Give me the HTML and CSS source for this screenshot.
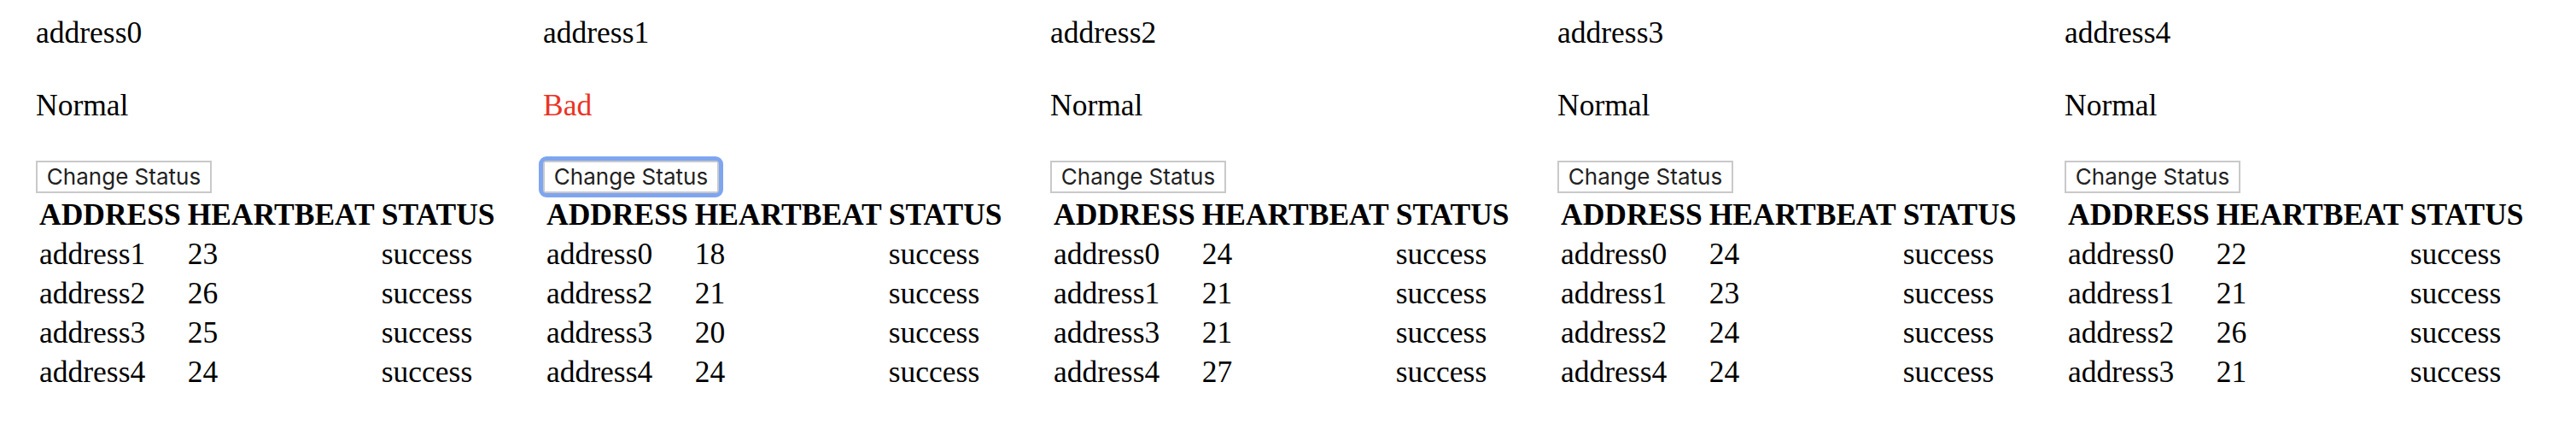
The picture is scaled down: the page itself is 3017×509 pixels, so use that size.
FILE: index.html
```html
<!DOCTYPE html>
<html lang="en">
<head>
<meta charset="utf-8">
<title>Heartbeat</title>
<link rel="stylesheet" href="styles.css">
</head>
<body>
<div class="board">
  <section class="node">
    <div class="addr">address0</div>
    <div class="status">Normal</div>
    <div class="actions"><button class="btn">Change Status</button></div>
    <table class="peers">
      <tr><th>ADDRESS</th><th>HEARTBEAT</th><th>STATUS</th></tr>
      <tr><td>address1</td><td>23</td><td>success</td></tr>
      <tr><td>address2</td><td>26</td><td>success</td></tr>
      <tr><td>address3</td><td>25</td><td>success</td></tr>
      <tr><td>address4</td><td>24</td><td>success</td></tr>
    </table>
  </section>
  <section class="node">
    <div class="addr">address1</div>
    <div class="status bad">Bad</div>
    <div class="actions"><button class="btn focused">Change Status</button></div>
    <table class="peers">
      <tr><th>ADDRESS</th><th>HEARTBEAT</th><th>STATUS</th></tr>
      <tr><td>address0</td><td>18</td><td>success</td></tr>
      <tr><td>address2</td><td>21</td><td>success</td></tr>
      <tr><td>address3</td><td>20</td><td>success</td></tr>
      <tr><td>address4</td><td>24</td><td>success</td></tr>
    </table>
  </section>
  <section class="node">
    <div class="addr">address2</div>
    <div class="status">Normal</div>
    <div class="actions"><button class="btn">Change Status</button></div>
    <table class="peers">
      <tr><th>ADDRESS</th><th>HEARTBEAT</th><th>STATUS</th></tr>
      <tr><td>address0</td><td>24</td><td>success</td></tr>
      <tr><td>address1</td><td>21</td><td>success</td></tr>
      <tr><td>address3</td><td>21</td><td>success</td></tr>
      <tr><td>address4</td><td>27</td><td>success</td></tr>
    </table>
  </section>
  <section class="node">
    <div class="addr">address3</div>
    <div class="status">Normal</div>
    <div class="actions"><button class="btn">Change Status</button></div>
    <table class="peers">
      <tr><th>ADDRESS</th><th>HEARTBEAT</th><th>STATUS</th></tr>
      <tr><td>address0</td><td>24</td><td>success</td></tr>
      <tr><td>address1</td><td>23</td><td>success</td></tr>
      <tr><td>address2</td><td>24</td><td>success</td></tr>
      <tr><td>address4</td><td>24</td><td>success</td></tr>
    </table>
  </section>
  <section class="node">
    <div class="addr">address4</div>
    <div class="status">Normal</div>
    <div class="actions"><button class="btn">Change Status</button></div>
    <table class="peers">
      <tr><th>ADDRESS</th><th>HEARTBEAT</th><th>STATUS</th></tr>
      <tr><td>address0</td><td>22</td><td>success</td></tr>
      <tr><td>address1</td><td>21</td><td>success</td></tr>
      <tr><td>address2</td><td>26</td><td>success</td></tr>
      <tr><td>address3</td><td>21</td><td>success</td></tr>
    </table>
  </section>
</div>
</body>
</html>
```

FILE: styles.css
```css
html, body {
  margin: 0;
  padding: 0;
  background: #ffffff;
}

body {
  font-family: "Liberation Serif", "Times New Roman", serif;
  font-size: 35.5px;
  color: #000000;
}

.board {
  display: grid;
  grid-template-columns: repeat(5, 594px);
  padding: 20px 0 0 42px;
}

.node {
  display: flex;
  flex-direction: column;
  align-items: flex-start;
}

.addr,
.status {
  line-height: 37px;
}

.status {
  margin-top: 48px;
}

.status.bad {
  color: #eb3323;
}

.actions {
  margin-top: 46px;
  display: flex;
}

.btn {
  position: relative;
  font-family: Inter, "Noto Sans", "Liberation Sans", sans-serif;
  font-size: 26px;
  line-height: 30px;
  color: #222222;
  background: #ffffff;
  border: 2px solid #c9c9c9;
  border-radius: 0;
  padding: 2px 10px;
  height: 38px;
  width: 206px;
  margin: 0;
  cursor: default;
}

.btn.focused::after {
  content: "";
  position: absolute;
  inset: -7px;
  border: 5px solid #7ea5f0;
  border-radius: 9px;
  pointer-events: none;
}

.peers {
  margin-top: 0;
  border-spacing: 4px;
  border-collapse: separate;
  margin-left: -2px;
}

.peers th,
.peers td {
  padding: 2px;
  line-height: 38px;
  text-align: left;
  white-space: nowrap;
}

.peers th {
  font-weight: bold;
}
```
